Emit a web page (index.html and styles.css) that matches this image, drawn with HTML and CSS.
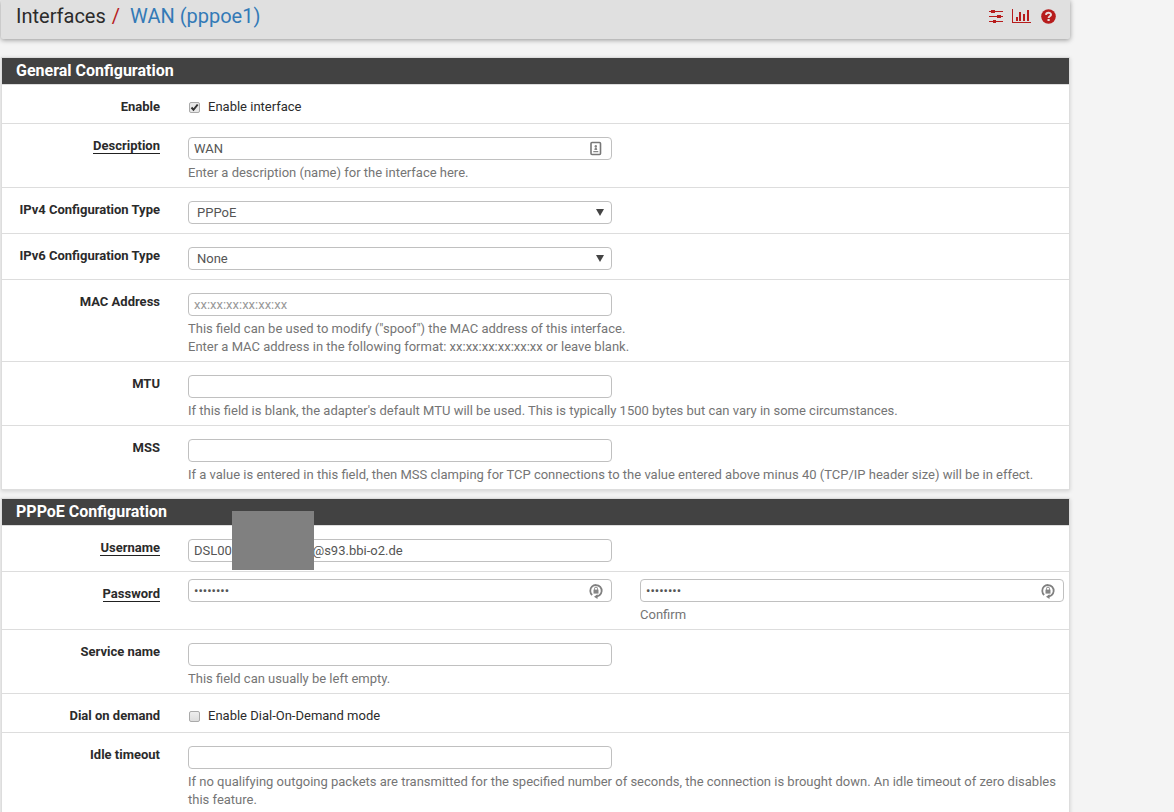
FILE: index.html
```html
<!DOCTYPE html>
<html lang="en">
<head>
<meta charset="utf-8">
<title>Interfaces: WAN (pppoe1)</title>
<link rel="stylesheet" href="styles.css">
</head>
<body>
<svg class="sprite" aria-hidden="true">
  <symbol id="icon-lock" viewBox="0 0 14 16">
    <path d="M3.200 12A5.700 5.700 0 1 1 10.500 12.200L7.500 13.600" fill="none" stroke="#808080" stroke-width="1.800"/>
    <path d="M8.500 11.200V16L5 13.800Z" fill="#808080"/>
    <path d="M4.500 6.600h5v4h-5z" fill="#858585"/>
    <path d="M5.500 6.800V5.600a1.500 1.500 0 0 1 3 0v1.200" fill="none" stroke="#858585"/>
  </symbol>
</svg>
<main class="page">
  <header class="titlebar">
    <h1 class="crumbs"><span>Interfaces</span><span class="slash">/</span><a class="current" href="#">WAN (pppoe1)</a></h1>
    <nav class="tools">
      <a href="#" aria-label="Related settings"><svg width="16" height="16" viewBox="0 0 16 16" fill="#b71c1c"><path d="M1 3h14v1H1zM1 8h14v1H1zM1 13h14v1H1z"/><path d="M3 2h4v3H3zM9 7h4v3H9zM5 12h3v3H5z"/></svg></a>
      <a href="#" aria-label="Monitoring"><svg width="20" height="16" viewBox="0 0 20 16" fill="#b71c1c"><path d="M0 1h1v13h18v1H0zM4 9h2v4H4zM7 4h2v9H7zM11 6h2v7h-2zM15 2h2v11h-2z"/></svg></a>
      <a href="#" aria-label="Help"><svg width="16" height="16" viewBox="0 0 16 16"><circle cx="8.500" cy="8.500" r="7.300" fill="#b71c1c"/><path d="M6 6.800C6.200 4.200 11 4.100 11 6.700C11 8.300 8.600 8.200 8.600 9.900" fill="none" stroke="#e8e0e0" stroke-width="2"/><path d="M7.500 11h2.200v2H7.500z" fill="#e8e0e0"/></svg></a>
    </nav>
  </header>

  <form>
    <section class="panel">
      <h2 class="panel-title">General Configuration</h2>
      <div class="row check-row">
        <span class="label">Enable</span>
        <label class="check"><input type="checkbox" checked> Enable interface</label>
      </div>
      <div class="row">
        <label class="label" for="descr"><span class="required">Description</span></label>
        <div class="field">
          <input class="control" id="descr" type="text" value="WAN">
          <svg class="field-icon" width="14" height="16" viewBox="0 0 14 16"><rect x="2" y="1.500" width="9.500" height="12" rx="1" fill="none" stroke="#777" stroke-width="1.600"/><circle cx="6.800" cy="5.300" r="1.200" fill="#858585"/><path d="M5.300 9L6 6.500h1.600l.7 2.500zM4.300 10h5v1.200h-5z" fill="#858585"/></svg>
        </div>
        <p class="help">Enter a description (name) for the interface here.</p>
      </div>
      <div class="row">
        <label class="label" for="type4">IPv4 Configuration Type</label>
        <div class="field"><select class="control" id="type4"><option>PPPoE</option></select></div>
      </div>
      <div class="row">
        <label class="label" for="type6">IPv6 Configuration Type</label>
        <div class="field"><select class="control" id="type6"><option>None</option></select></div>
      </div>
      <div class="row">
        <label class="label" for="mac">MAC Address</label>
        <div class="field"><input class="control" id="mac" type="text" placeholder="xx:xx:xx:xx:xx:xx"></div>
        <p class="help">This field can be used to modify ("spoof") the MAC address of this interface.<br>Enter a MAC address in the following format: xx:xx:xx:xx:xx:xx or leave blank.</p>
      </div>
      <div class="row">
        <label class="label" for="mtu">MTU</label>
        <div class="field"><input class="control" id="mtu" type="text"></div>
        <p class="help">If this field is blank, the adapter's default MTU will be used. This is typically 1500 bytes but can vary in some circumstances.</p>
      </div>
      <div class="row">
        <label class="label" for="mss">MSS</label>
        <div class="field"><input class="control" id="mss" type="text"></div>
        <p class="help">If a value is entered in this field, then MSS clamping for TCP connections to the value entered above minus 40 (TCP/IP header size) will be in effect.</p>
      </div>
    </section>

    <section class="panel">
      <h2 class="panel-title">PPPoE Configuration</h2>
      <div class="row">
        <label class="label" for="user"><span class="required">Username</span></label>
        <div class="field">
          <input class="control" id="user" type="text" value="DSL00&nbsp;&nbsp;&nbsp;&nbsp;&nbsp;&nbsp;&nbsp;&nbsp;&nbsp;&nbsp;&nbsp;&nbsp;&nbsp;&nbsp;&nbsp;&nbsp;&nbsp;&nbsp;&nbsp;&nbsp;&nbsp;&nbsp;&nbsp;&nbsp;&nbsp;@s93.bbi-o2.de">
          <span class="redaction"></span>
        </div>
      </div>
      <div class="row password-row">
        <label class="label" for="pass"><span class="required">Password</span></label>
        <div class="field">
          <input class="control" id="pass" type="password" value="password">
          <svg class="field-icon" width="14" height="16"><use href="#icon-lock"/></svg>
        </div>
        <div class="field">
          <input class="control" id="pass2" type="password" value="password">
          <svg class="field-icon" width="14" height="16"><use href="#icon-lock"/></svg>
          <label class="help" for="pass2">Confirm</label>
        </div>
      </div>
      <div class="row">
        <label class="label" for="service">Service name</label>
        <div class="field"><input class="control" id="service" type="text"></div>
        <p class="help">This field can usually be left empty.</p>
      </div>
      <div class="row check-row">
        <span class="label">Dial on demand</span>
        <label class="check"><input type="checkbox"> Enable Dial-On-Demand mode</label>
      </div>
      <div class="row">
        <label class="label" for="idle">Idle timeout</label>
        <div class="field"><input class="control" id="idle" type="text"></div>
        <p class="help">If no qualifying outgoing packets are transmitted for the specified number of seconds, the connection is brought down. An idle timeout of zero disables this feature.</p>
      </div>
    </section>
  </form>
</main>
</body>
</html>
```
FILE: styles.css
```css
* {
  box-sizing: border-box;
}

body {
  margin: 0;
  background: #f4f4f4;
  color: #2b2b2b;
  font: 13px/18px Roboto, sans-serif;
}

.sprite {
  display: none;
}

.page {
  margin: 0 104px 0 1px;
}

.titlebar {
  display: flex;
  justify-content: space-between;
  align-items: center;
  height: 39px;
  margin-bottom: 18px;
  padding: 0 14px 7px 15px;
  background: #e0e0e0;
  border-radius: 0 0 2px 2px;
  box-shadow: 0 1px 5px rgba(0, 0, 0, 0.4);
}

.crumbs {
  display: flex;
  margin: 0;
  font-size: 20px;
  font-weight: 400;
  line-height: 28px;
}

.slash {
  margin: 0 10px 0 6px;
  color: #b71c1c;
}

.current {
  color: #337ab7;
  text-decoration: none;
}

.tools {
  display: flex;
  gap: 8px;
}

.tools svg {
  display: block;
}

.panel {
  margin-bottom: 8px;
  background: #fff;
  border: 1px solid #ddd;
  border-width: 0 1px;
  box-shadow: 0 1px 4px rgba(0, 0, 0, 0.15);
}

.panel-title {
  margin: 0;
  padding: 0 14px;
  background: #424242;
  border: 1px solid #ddd;
  border-width: 1px 0;
  color: #fff;
  font-size: 16px;
  font-weight: 700;
  line-height: 26px;
}

.row {
  display: grid;
  grid-template-columns: 158px 1fr 1fr;
  column-gap: 28px;
  padding: 13px 5px 5px 0;
  border-bottom: 1px solid #ddd;
}

.label {
  grid-row: 1 / span 2;
  font-weight: 700;
  text-align: right;
}

.required {
  display: inline-block;
  border-bottom: 1px solid #212121;
  line-height: 15px;
}

.field {
  position: relative;
}

.control {
  display: block;
  width: 100%;
  height: 23px;
  margin: 0 0 4px;
  padding: 0 5px;
  background: #fff;
  border: 1px solid #c0c0c0;
  border-radius: 4px;
  color: #555;
  font: inherit;
}

.control::placeholder {
  color: #999;
}

select.control {
  padding: 0 8px;
  appearance: none;
  background: #fff url("data:image/svg+xml,%3Csvg xmlns='http://www.w3.org/2000/svg' width='8' height='7'%3E%3Cpath d='M0 0h8L4 7z' fill='%23444'/%3E%3C/svg%3E") no-repeat right 7px center;
}

.field-icon {
  position: absolute;
  top: 4px;
  right: 9px;
}

.redaction {
  position: absolute;
  top: -28px;
  left: 44px;
  width: 82px;
  height: 59px;
  background: #808080;
}

.help {
  grid-column: 2 / -1;
  display: block;
  margin: 0;
  color: #757575;
}

.password-row {
  padding-top: 7px;
}

.password-row > .label {
  padding-top: 6px;
}

.check-row {
  padding-bottom: 7px;
}

.check {
  display: flex;
  align-items: center;
  gap: 8px;
}

.check input {
  appearance: none;
  width: 11px;
  height: 11px;
  margin: 0 0 0 1px;
  background: linear-gradient(#eee, #ddd);
  border: 1px solid #aaa;
  border-radius: 2px;
}

.check input:checked {
  background: url("data:image/svg+xml,%3Csvg xmlns='http://www.w3.org/2000/svg' viewBox='0 0 9 9'%3E%3Cpath d='M1.500 4.500l2 2.300L7.700 1.500' fill='none' stroke='%23333' stroke-width='2'/%3E%3C/svg%3E") #e8e8e8;
}
```
